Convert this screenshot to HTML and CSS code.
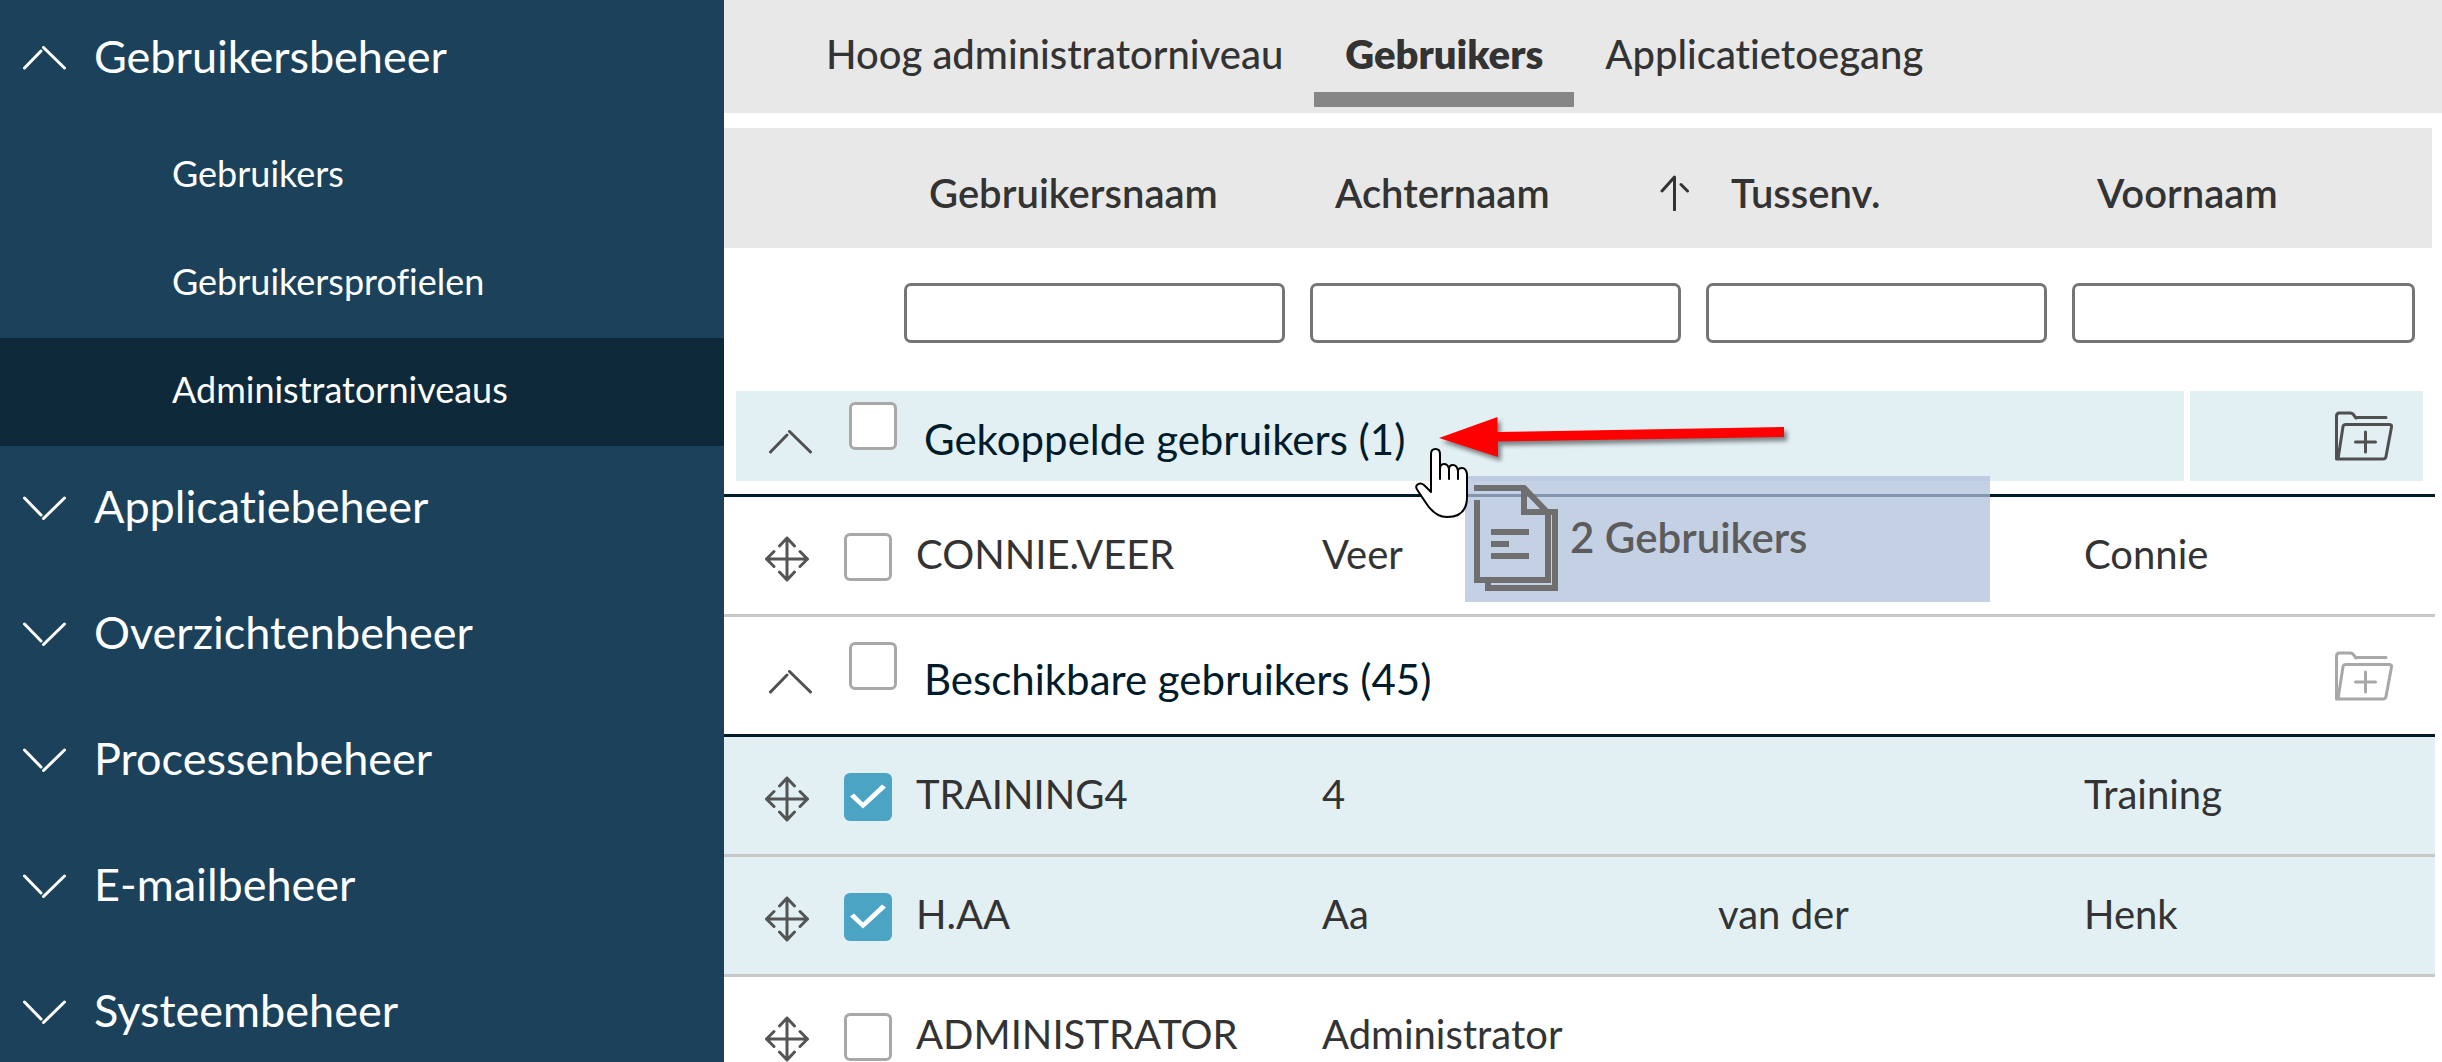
FILE: index.html
```html
<!DOCTYPE html>
<html lang="nl">
<head>
<meta charset="utf-8">
<title>Administratorniveaus</title>
<meta name="viewport" content="width=device-width, initial-scale=1">
<link rel="stylesheet" href="styles.css">
</head>
<body>
<svg class="sprite" aria-hidden="true">
  <symbol id="chevron-up" viewBox="0 0 43 24"><path d="M1.500 22 18 5M20.500 1.500 41.500 22"/></symbol>
  <symbol id="chevron-down" viewBox="0 0 43 24"><path d="M1.500 2 18 19M20.500 22.500 41.500 2"/></symbol>
  <symbol id="move" viewBox="0 0 44 46"><path d="M22 2V44M1.500 23H42.500M14.500 10 22 2l7.500 8M14.500 36 22 44l7.500-8M9 15.500 1.500 23 9 30.500M35 15.500 42.500 23 35 30.500"/></symbol>
  <symbol id="folder-plus" viewBox="0 0 58 50"><path d="M1.500 48V5Q1.500 2 4.500 2H15Q18 2 19.500 5T22 6.500H51M3 48 8 15.500Q8.500 13.500 11 13.500H54Q57 13.500 56.500 16L51 45.500Q50.500 48 48 48H1.500M30.500 21V41M20.500 31H40.500"/></symbol>
</svg>
<div class="shell">
  <nav class="sidebar" aria-label="Beheer">
    <section class="nav-group">
      <button class="nav-head" type="button" aria-expanded="true"><svg class="chevron"><use href="#chevron-up"/></svg>Gebruikersbeheer</button>
      <a class="nav-link" href="#gebruikers">Gebruikers</a>
      <a class="nav-link" href="#profielen">Gebruikersprofielen</a>
      <a class="nav-link active" href="#niveaus" aria-current="page">Administratorniveaus</a>
    </section>
    <section class="nav-group"><button class="nav-head" type="button"><svg class="chevron"><use href="#chevron-down"/></svg>Applicatiebeheer</button></section>
    <section class="nav-group"><button class="nav-head" type="button"><svg class="chevron"><use href="#chevron-down"/></svg>Overzichtenbeheer</button></section>
    <section class="nav-group"><button class="nav-head" type="button"><svg class="chevron"><use href="#chevron-down"/></svg>Processenbeheer</button></section>
    <section class="nav-group"><button class="nav-head" type="button"><svg class="chevron"><use href="#chevron-down"/></svg>E-mailbeheer</button></section>
    <section class="nav-group"><button class="nav-head" type="button"><svg class="chevron"><use href="#chevron-down"/></svg>Systeembeheer</button></section>
  </nav>

  <main class="content">
    <div class="tabs" role="tablist">
      <button class="tab" type="button" role="tab">Hoog administratorniveau</button>
      <button class="tab selected" type="button" role="tab" aria-selected="true">Gebruikers</button>
      <button class="tab" type="button" role="tab">Applicatietoegang</button>
    </div>

    <table class="grid">
      <colgroup><col class="c-select"><col class="c-user"><col class="c-last"><col class="c-infix"><col class="c-first"></colgroup>
      <thead>
        <tr class="titles">
          <td></td>
          <th scope="col">Gebruikersnaam</th>
          <th scope="col" aria-sort="ascending"><div class="sorted">Achternaam<svg class="sort" viewBox="0 0 30 36"><path d="M14.500 35V2L2 16M21 9.500 27.500 16"/></svg></div></th>
          <th scope="col">Tussenv.</th>
          <th scope="col">Voornaam</th>
        </tr>
        <tr class="filters">
          <td></td>
          <td><input class="filter" type="text" aria-label="Filter gebruikersnaam"></td>
          <td><input class="filter" type="text" aria-label="Filter achternaam"></td>
          <td><input class="filter" type="text" aria-label="Filter tussenvoegsel"></td>
          <td><input class="filter" type="text" aria-label="Filter voornaam"></td>
        </tr>
      </thead>
      <tbody>
        <tr class="group target">
          <td colspan="5"><div class="group-bar">
            <div class="group-name">
              <button class="icon-button" type="button" aria-label="Inklappen"><svg class="chevron"><use href="#chevron-up"/></svg></button>
              <input class="check" type="checkbox" id="linked"><label for="linked">Gekoppelde gebruikers (1)</label>
            </div>
            <div class="group-action"><button class="icon-button" type="button" aria-label="Koppelen"><svg class="folder"><use href="#folder-plus"/></svg></button></div>
          </div></td>
        </tr>
        <tr class="row">
          <td><div class="pick"><svg class="move"><use href="#move"/></svg><input class="check" type="checkbox" aria-label="CONNIE.VEER"></div></td>
          <td>CONNIE.VEER</td><td>Veer</td><td></td><td>Connie</td>
        </tr>
        <tr class="group">
          <td colspan="5"><div class="group-bar">
            <div class="group-name">
              <button class="icon-button" type="button" aria-label="Inklappen"><svg class="chevron"><use href="#chevron-up"/></svg></button>
              <input class="check" type="checkbox" id="available"><label for="available">Beschikbare gebruikers (45)</label>
            </div>
            <div class="group-action"><button class="icon-button" type="button" aria-label="Koppelen" disabled><svg class="folder"><use href="#folder-plus"/></svg></button></div>
          </div></td>
        </tr>
        <tr class="row picked">
          <td><div class="pick"><svg class="move"><use href="#move"/></svg><input class="check" type="checkbox" aria-label="TRAINING4" checked></div></td>
          <td>TRAINING4</td><td>4</td><td></td><td>Training</td>
        </tr>
        <tr class="row picked">
          <td><div class="pick"><svg class="move"><use href="#move"/></svg><input class="check" type="checkbox" aria-label="H.AA" checked></div></td>
          <td>H.AA</td><td>Aa</td><td>van der</td><td>Henk</td>
        </tr>
        <tr class="row">
          <td><div class="pick"><svg class="move"><use href="#move"/></svg><input class="check" type="checkbox" aria-label="ADMINISTRATOR"></div></td>
          <td>ADMINISTRATOR</td><td>Administrator</td><td></td><td></td>
        </tr>
      </tbody>
    </table>

    <div class="drag-ghost">
      <svg class="pages" viewBox="0 0 84 106"><path d="M0 3H50L74 28V95H3V15M50 3V27H74M74 27H81V103H14V97M17 47H55M17 59H35M17 71H55"/></svg>
      <span>2 Gebruikers</span>
    </div>
    <svg class="arrow" viewBox="0 0 352 50"><path d="M0 21 58.500 0V15L345 10V20L59 24.500V40Z"/></svg>
    <svg class="hand" viewBox="0 0 54 72"><path d="M16 44V7Q16 2 20.500 2T25 7V22Q25 17 29 17T34 22Q34 18 38 18T43 24Q43 21 47 21T52 27V50Q52 70 32 70 20 70 11 56L3 44Q0 40 2 38 5 35 9 38L16 45M25 20V32M34 21V32M43 23V32"/></svg>
  </main>
</div>
</body>
</html>
```
FILE: styles.css
```css
* { box-sizing: border-box; }
body { margin: 0; font-family: Lato, "Open Sans", sans-serif; font-size: 40px; font-variant-ligatures: none; color: #333; background: #fff; }
button { margin: 0; padding: 0; border: 0; background: none; font: inherit; font-variant-ligatures: inherit; color: inherit; text-align: left; cursor: pointer; }
svg { display: block; flex: none; fill: none; stroke: currentColor; stroke-linecap: round; stroke-linejoin: round; }
.sprite { position: absolute; width: 0; height: 0; }

.shell { display: flex; height: 100vh; overflow: hidden; }

.sidebar { flex: none; width: 724px; background: #1b425a; color: #fff; }
.nav-group + .nav-group { padding-top: 4px; }
.nav-head { display: flex; align-items: center; gap: 28px; width: 100%; height: 122px; padding: 0 23px 10px; font-size: 45px; }
.nav-head .chevron { margin-top: 4px; }
.nav-link { display: flex; align-items: center; height: 108px; padding: 0 20px 6px 172px; font-size: 36px; color: #fff; text-decoration: none; }
.nav-link.active { background: #0e293a; }
.chevron { width: 43px; height: 24px; stroke-width: 3; }

.content { position: relative; flex: 1; min-width: 0; }
.tabs { display: flex; height: 113px; margin-bottom: 15px; padding: 0 71px; background: #e8e8e8; font-size: 40px; font-weight: 500; }
.tab { height: 107px; padding: 16px 31px 0; border-bottom: 15px solid transparent; line-height: 76px; }
.tab.selected { border-color: #868686; font-weight: 800; }

.grid { width: calc(100% - 7px); table-layout: fixed; border-spacing: 0; }
.c-select { width: 180px; }
.c-user { width: 406px; }
.c-last { width: 396px; }
.c-infix { width: 366px; }
.c-first { width: 363px; }
.grid td, .grid th { padding: 0; text-align: left; white-space: nowrap; }

.titles > * { height: 120px; background: #e8e8e8; }
.grid .titles > th { padding: 10px 16px 0 25px; font-size: 40px; font-weight: 600; }
.titles > :last-child { border-right: 3px solid #fff; }
.sorted { display: flex; align-items: center; justify-content: space-between; }
.sort { width: 30px; height: 36px; stroke-width: 3; }

.grid .filters > td { height: 129px; padding-right: 25px; }
.grid .filters > td:last-child { padding-right: 20px; }
.filter { display: block; width: 100%; height: 60px; padding: 0 12px; border: 3px solid #757575; border-radius: 7px; font: inherit; background: #fff; }

.grid .group > td { height: 120px; padding: 14px 12px 13px; border-bottom: 3px solid #001b29; color: #001b29; font-size: 42px; }
.group-bar { display: flex; gap: 6px; height: 90px; }
.group-name { display: flex; flex: 1; align-items: center; padding-left: 33px; }
.group-name .check { align-self: flex-start; margin: 11px 27px 0 37px; }
.group-name label { padding-top: 6px; }
.group-name .chevron { margin-top: 12px; }
.group-action { display: flex; align-items: flex-start; justify-content: flex-end; width: 233px; padding: 20px 30px 0 0; }
.target .group-name, .target .group-action { background: #e2eff3; }
.icon-button { color: #505050; }
.icon-button:disabled { color: #a8a8a8; }
.folder { width: 58px; height: 50px; stroke-width: 3; }

.grid .row > td { height: 120px; padding: 0 12px 4px; border-bottom: 3px solid #c8c8c8; }
.grid .row > td:first-child { padding: 6px 0 0; }
.picked > td { background: #e2eff3; }
.pick { display: flex; align-items: center; gap: 35px; padding-left: 41px; }
.pick .check { margin-bottom: 4px; }
.move { width: 44px; height: 46px; stroke: #555; stroke-width: 3; }

.check { appearance: none; flex: none; width: 48px; height: 48px; margin: 0; border: 3px solid #a8a8a8; border-radius: 6px; background: #fff; }
.check:checked { border: 0; background: #4ba4c3; }
.check:checked::after { content: ""; display: block; width: 48px; height: 48px; background: #fff; clip-path: polygon(6px 24px, 10px 21px, 19px 30px, 38px 12px, 42px 15px, 19px 36px); }

.drag-ghost { position: absolute; left: 741px; top: 476px; display: flex; align-items: flex-start; gap: 12px; width: 525px; height: 126px; padding: 9px; background: rgba(176, 192, 219, 0.75); color: #5c5c5c; font-size: 42px; font-weight: 600; line-height: 104px; }
.pages { width: 84px; height: 106px; stroke: #6f6f6f; stroke-width: 6; stroke-linecap: butt; stroke-linejoin: miter; }
.arrow { position: absolute; left: 715px; top: 417px; width: 352px; height: 50px; fill: #f00; stroke: none; filter: drop-shadow(3px 4px 2px rgba(0, 0, 0, 0.45)); }
.hand { position: absolute; left: 691px; top: 447px; width: 54px; height: 72px; fill: #fff; stroke: #000; stroke-width: 2; }
```
